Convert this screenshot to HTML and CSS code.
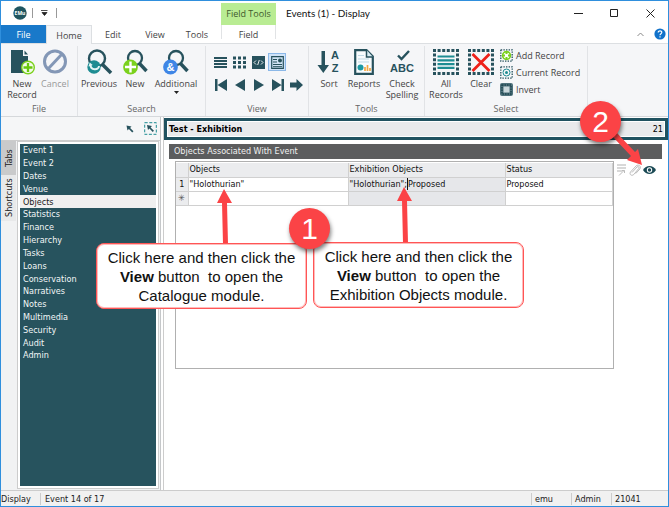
FILE: index.html
```html
<!DOCTYPE html>
<html lang="en">
<head>
<meta charset="utf-8">
<title>Events (1) - Display</title>
<link rel="stylesheet" href="styles.css">
</head>
<body>
<div class="window">
  <header class="titlebar">
    <div class="quick">
      <svg class="logo" width="14" height="14" viewBox="0 0 14 14"><circle cx="7" cy="7" r="6.7" fill="#1f5560"/><text x="7" y="9" text-anchor="middle" class="logo-text">EMu</text></svg>
      <span class="bar"></span>
      <button class="plain" aria-label="Customize toolbar"><svg width="7" height="6" viewBox="0 0 7 6"><path d="M0 .5h6.500M1 2.500h5L3.500 5.500z" stroke="#222" stroke-width=".8" fill="#222"/></svg></button>
      <span class="bar"></span>
    </div>
    <div class="context">Field Tools</div>
    <h1 class="title">Events (1) - Display</h1>
    <div class="win-buttons">
      <button aria-label="Minimize"><svg width="9" height="9"><path d="M0 4.500h9" stroke="#222"/></svg></button>
      <button aria-label="Maximize"><svg width="9" height="9"><path d="M.5.5h7v7h-7z" stroke="#222" fill="none"/></svg></button>
      <button aria-label="Close"><svg width="9" height="9"><path d="M.5.5l8 8M8.500.5l-8 8" stroke="#222"/></svg></button>
    </div>
  </header>

  <nav class="tabs">
    <button class="tab file">File</button>
    <button class="tab home">Home</button>
    <button class="tab">Edit</button>
    <button class="tab">View</button>
    <button class="tab">Tools</button>
    <button class="tab field">Field</button>
    <div class="tab-tools">
      <button class="plain" aria-label="Collapse ribbon"><svg width="7" height="5"><path d="M.5 4L3.500 1l3 3" stroke="#888" fill="none"/></svg></button>
      <button class="plain" aria-label="Help"><svg width="12" height="12"><circle cx="6" cy="6" r="5.600" fill="#1172ca"/><path d="M4.200 4.600c0-2.400 3.700-2.200 3.600-.1C7.700 5.700 6 5.700 6 7.200M6 8.300v1.200" stroke="#fff" stroke-width="1.200" fill="none"/></svg></button>
    </div>
  </nav>

  <div class="ribbon">
    <section class="group g-file">
      <div class="tools">
        <button class="big w32"><svg width="26" height="26" viewBox="0 0 26 26"><path d="M2 1h12v6h5v17H2z" fill="#27525d"/><path d="M15.500 1.500l3.500 4h-3.500z" fill="#27525d"/><circle cx="19" cy="18.500" r="6.300" fill="#f2fbe9" stroke="#7bd11d" stroke-width="1.400"/><path d="M19 14v9M14.500 18.500h9" stroke="#68c80c" stroke-width="2.300"/></svg><span>New<br>Record</span></button>
        <button class="big w34 off" disabled><svg width="26" height="26" viewBox="0 0 26 26"><circle cx="13" cy="12.500" r="10.500" fill="none" stroke="#8397b6" stroke-width="3"/><path d="M20 5L6 20" stroke="#8397b6" stroke-width="3"/></svg><span>Cancel</span></button>
      </div>
      <h2>File</h2>
    </section>
    <section class="group g-search">
      <div class="tools">
        <button class="big w40"><svg width="28" height="26" viewBox="0 0 28 26"><circle cx="12" cy="9.500" r="8" fill="none" stroke="#27525d" stroke-width="2.400"/><path d="M17 15l9 9" stroke="#27525d" stroke-width="3.600"/><circle cx="9" cy="18" r="6.700" fill="#1e8c92"/><path d="M5.500 16c0 5 8 6 8.500 1" stroke="#e3f4f4" stroke-width="2" fill="none"/><path d="M3.500 17.500l1.200-4 3 2.600z" fill="#e3f4f4"/></svg><span>Previous</span></button>
        <button class="big w32"><svg width="28" height="26" viewBox="0 0 28 26"><circle cx="14" cy="9" r="7" fill="none" stroke="#27525d" stroke-width="2.300"/><path d="M18.500 14.500l7 7.500" stroke="#27525d" stroke-width="3.400"/><circle cx="9.500" cy="18" r="7.400" fill="#7bd11d"/><path d="M9.500 12.500v11M4 18h11" stroke="#fff" stroke-width="2.400"/></svg><span>New</span></button>
        <button class="big w50"><svg width="28" height="26" viewBox="0 0 28 26"><circle cx="14" cy="9" r="7" fill="none" stroke="#27525d" stroke-width="2.300"/><path d="M18.500 14.500l7 7.500" stroke="#27525d" stroke-width="3.400"/><circle cx="8.500" cy="18" r="7.400" fill="#3f86e6"/><text x="8.500" y="22" text-anchor="middle" class="amp">&amp;</text></svg><span>Additional</span><svg class="drop" width="5" height="3"><path d="M0 0h5L2.500 3z" fill="#222"/></svg></button>
      </div>
      <h2>Search</h2>
    </section>
    <section class="group g-view">
      <div class="tools view-tools">
        <div class="view-row">
          <button aria-label="List"><svg width="13" height="13"><path d="M0 2h13M0 5h13M0 8h13M0 11h13" stroke="#27525d" stroke-width="1.900"/></svg></button>
          <button aria-label="Contact sheet"><svg width="13" height="13"><path d="M0 2h13M0 6.500h13M0 11h13" stroke="#27525d" stroke-width="3" stroke-dasharray="3 2"/></svg></button>
          <button aria-label="Page"><svg width="13" height="13"><path d="M0 0h13v13H0z" fill="#27525d"/><path d="M4 4.500l-2 2 2 2M9 4.500l2 2-2 2M7.300 4L5.700 9" stroke="#fff" stroke-width=".9" fill="none"/></svg></button>
          <button aria-label="Form" class="active"><svg width="13" height="13"><path d="M.7.700h11.600v11.600H.7z" stroke="#27525d" stroke-width="1.200" fill="#cfe3f4"/><path d="M2 3.500h4M2 6h4M2 8.500h9M2 10.700h9" stroke="#27525d"/><circle cx="9" cy="4.500" r="2" fill="#27525d"/></svg></button>
        </div>
        <div class="view-row nav-row">
          <button aria-label="First"><svg width="12" height="12"><path d="M0 0h2.500v12H0zM12 0v12L2.500 6z" fill="#27525d"/></svg></button>
          <button aria-label="Previous record"><svg width="10" height="12"><path d="M10 0v12L0 6z" fill="#27525d"/></svg></button>
          <button aria-label="Next record"><svg width="10" height="12"><path d="M0 0v12l10-6z" fill="#27525d"/></svg></button>
          <button aria-label="Last"><svg width="12" height="12"><path d="M9.500 0H12v12H9.500zM0 0v12l9.500-6z" fill="#27525d"/></svg></button>
          <button aria-label="Go to"><svg width="13" height="12"><path d="M0 3.500h6.500V0L13 6l-6.500 6V8.500H0z" fill="#27525d"/></svg></button>
        </div>
      </div>
      <h2>View</h2>
    </section>
    <section class="group g-tools">
      <div class="tools">
        <button class="big w34"><svg width="24" height="26" viewBox="0 0 24 26"><path d="M4.500 2h3.500v14h4L6.300 24 .5 16h4z" fill="#27525d"/><text x="18" y="10" text-anchor="middle" class="az">A</text><text x="18" y="23" text-anchor="middle" class="az">Z</text></svg><span>Sort</span></button>
        <button class="big w36"><svg width="20" height="26" viewBox="0 0 20 26"><path d="M1.200 1.200h11.300l6.300 6.300v17.300H1.200z" fill="#f8fcfe" stroke="#27525d" stroke-width="2.200"/><path d="M12.500 1v7H19" fill="#d8edf4" stroke="#27525d" stroke-width="1.500"/><path d="M4 6.500h6M4 10h11M4 13h11" stroke="#bfd9e5"/><circle cx="6.500" cy="18.500" r="3" fill="#1e9aa3"/><path d="M11 22v-4M13.500 22v-6M16 22v-3" stroke="#f5a844" stroke-width="1.700"/></svg><span>Reports</span></button>
        <button class="big w40"><svg width="26" height="26" viewBox="0 0 26 26"><path d="M9 6.500l3.500 3.500L20 2" stroke="#27525d" stroke-width="2.400" fill="none"/><text x="13" y="23" text-anchor="middle" class="abc">ABC</text></svg><span>Check<br>Spelling</span></button>
      </div>
      <h2>Tools</h2>
    </section>
    <section class="group g-select">
      <div class="tools">
        <button class="big w40"><svg width="26" height="26" viewBox="0 0 26 26"><path d="M0 1.500h26M0 24.500h26" stroke="#27525d" stroke-width="3" stroke-dasharray="3 1.600"/><path d="M1.500 4.600v17M24.500 4.600v17" stroke="#27525d" stroke-width="3" stroke-dasharray="3 1.600"/><path d="M4.500 7.500h17M4.500 11.300h17M4.500 15.100h17M4.500 18.900h17" stroke="#1e8c92" stroke-width="2.200"/></svg><span>All<br>Records</span></button>
        <button class="big w28"><svg width="26" height="26" viewBox="0 0 26 26"><path d="M0 1.500h26M0 24.500h26" stroke="#27525d" stroke-width="3" stroke-dasharray="3 1.600"/><path d="M1.500 4.600v17M24.500 4.600v17" stroke="#27525d" stroke-width="3" stroke-dasharray="3 1.600"/><path d="M4.500 5l17 17M21.500 5l-17 17" stroke="#ee2018" stroke-width="2.800"/></svg><span>Clear</span></button>
        <div class="small-list">
          <button><svg width="13" height="13"><path d="M.8.800h11.400v11.400H.8z" fill="none" stroke="#27525d" stroke-width="1.300" stroke-dasharray="1.400 1.200"/><circle cx="6.500" cy="6.500" r="3.900" fill="#fff" stroke="#7bd11d" stroke-width="1.600"/><path d="M6.500 2v3M6.500 8v3M2 6.500h3M8 6.500h3" stroke="#7bd11d" stroke-width="2"/></svg>Add Record</button>
          <button><svg width="13" height="13"><path d="M.8.800h11.400v11.400H.8z" fill="none" stroke="#27525d" stroke-width="1.300" stroke-dasharray="1.400 1.200"/><circle cx="6.500" cy="6.500" r="3.500" fill="none" stroke="#1e8c92"/><circle cx="6.500" cy="6.500" r="1.500" fill="#1e8c92"/></svg>Current Record</button>
          <button><svg width="13" height="13"><rect width="13" height="13" rx="2" fill="#4e717b"/><path d="M2 2h9v9H2z" fill="none" stroke="#1f4650" stroke-width="1.500" stroke-dasharray="1.500 1"/><path d="M3.500 3.500h6v6h-6z" fill="#c8d6da"/></svg>Invert</button>
        </div>
      </div>
      <h2>Select</h2>
    </section>
  </div>

  <main class="body">
    <aside class="side">
      <div class="side-tools">
        <button class="plain" aria-label="Select"><svg width="8" height="8"><path d="M.5.500l5 1-1.400 1.400L7.500 6.200 6.200 7.500 2.900 4.100 1.500 5.500z" fill="#27525d"/></svg></button>
        <button class="plain" aria-label="Select area"><svg width="13" height="13"><path d="M.7.700h11.600v11.600H.7z" fill="none" stroke="#1e8c92" stroke-dasharray="3 1.600"/><path d="M3 3l5 1-1.400 1.400L10 8.700 8.700 10 5.400 6.600 4 8z" fill="#27525d"/></svg></button>
      </div>
      <div class="side-main">
        <div class="vtabs">
          <button class="vtab on">Tabs</button>
          <button class="vtab">Shortcuts</button>
        </div>
        <div class="list-frame">
          <ul class="list">
            <li><button>Event 1</button></li>
            <li><button>Event 2</button></li>
            <li><button>Dates</button></li>
            <li><button>Venue</button></li>
            <li><button class="current">Objects</button></li>
            <li><button>Statistics</button></li>
            <li><button>Finance</button></li>
            <li><button>Hierarchy</button></li>
            <li><button>Tasks</button></li>
            <li><button>Loans</button></li>
            <li><button>Conservation</button></li>
            <li><button>Narratives</button></li>
            <li><button>Notes</button></li>
            <li><button>Multimedia</button></li>
            <li><button>Security</button></li>
            <li><button>Audit</button></li>
            <li><button>Admin</button></li>
          </ul>
        </div>
      </div>
    </aside>

    <section class="record">
      <div class="summary"><strong>Test - Exhibition</strong><span>21</span></div>
      <h2 class="section-title">Objects Associated With Event</h2>
      <div class="grid-row">
        <div class="grid-box">
          <table>
            <colgroup><col class="c-num"><col class="c-obj"><col class="c-exh"><col></colgroup>
            <thead><tr><th></th><th>Objects</th><th>Exhibition Objects</th><th>Status</th></tr></thead>
            <tbody>
              <tr><th>1</th><td>"Holothurian"</td><td class="shade">"Holothurian";<span class="caret"></span>Proposed</td><td>Proposed</td></tr>
              <tr><th class="star">✳</th><td></td><td class="shade"></td><td></td></tr>
            </tbody>
          </table>
        </div>
        <div class="grid-icons">
          <button class="plain" aria-label="Fill"><svg width="10" height="12"><path d="M0 1h9M0 4h9M0 7h5" stroke="#ccc" stroke-width="1.500"/><path d="M2 11.500L7 6.500M7.500 9V6.500H5" stroke="#bbb" fill="none"/></svg></button>
          <button class="plain" aria-label="Attach"><svg width="12" height="13"><path d="M3 8.500l5-5.500c1.300-1 2.500 0 1.700 1.500L4.800 10.500C2.500 12.500 0 10.300 1.500 8L7 2C9.500-.3 12.600 2.300 10.800 5l-4 4.500" stroke="#bbb" fill="none"/></svg></button>
          <button class="plain" aria-label="View"><svg width="13" height="8"><path d="M0 4C3-1.200 10-1.200 13 4 10 9.200 3 9.200 0 4z" fill="#1b4a55"/><circle cx="6.500" cy="4" r="2.700" fill="#fff"/><circle cx="6.500" cy="4" r="1.700" fill="#1b4a55"/></svg></button>
        </div>
      </div>
    </section>
  </main>

  <footer class="status">
    <span class="s-mode">Display</span><span class="s-pos">Event 14 of 17</span><span class="s-cell">emu</span><span class="s-cell">Admin</span><span class="s-cell s-last">21041</span>
  </footer>

  <svg class="arrows" width="669" height="507" viewBox="0 0 669 507" fill="#fb4346">
    <path d="M224 189l8 14h-5l1 41h-5l-1-41h-5z"/>
    <path d="M404 187l8 14h-5l1 42h-5l-1-42h-5z"/>
    <path d="M642 165l-15-5 4-4-18-19 4-4 18 19 3-3z"/>
  </svg>
  <div class="callout one">Click here and then click the<br><b>View</b> button&nbsp; to open the<br>Catalogue module.</div>
  <div class="callout two">Click here and then click the<br><b>View</b> button&nbsp; to open the<br>Exhibition Objects module.</div>
  <div class="badge b-one">1</div>
  <div class="badge b-two">2</div>
</div>
</body>
</html>
```

FILE: styles.css
```css
* { box-sizing: border-box; }
body { margin: 0; font: 9px/11px "Open Sans", "Noto Sans", sans-serif; color: #444; }
h1, h2 { margin: 0; font-size: inherit; font-weight: normal; }
button { margin: 0; padding: 0; border: 0; background: none; font: inherit; color: inherit; white-space: nowrap; }
svg { display: block; flex: none; }

.window { position: relative; display: flex; flex-direction: column; min-height: 100vh; border: 1px solid #2f8fdd; background: #fff; overflow: hidden; }

.titlebar { display: flex; height: 24px; }
.quick { display: flex; align-items: center; gap: 8px; width: 220px; padding-left: 12px; }
.quick .logo { margin-right: -3px; }
.logo-text { font: bold 5px "Open Sans", sans-serif; fill: #fff; }
.bar { width: 1px; height: 10px; background: #999; }
.context { width: 55px; margin-top: 2px; background: #b9ec93; line-height: 22px; text-align: center; color: #3f5a2c; }
.title { flex: 1; padding-left: 10px; font: 10px/24px Lato, "Open Sans", sans-serif; color: #111; }
.win-buttons { display: flex; }
.win-buttons button { display: flex; align-items: center; justify-content: center; width: 36px; }

.tabs { display: flex; height: 19px; border-bottom: 1px solid #dcdfe2; }
.tab { width: 42px; }
.file { width: 45px; height: 18px; background: #1979ca; color: #fff; }
.home { width: 46px; height: 19px; background: #f5f6f8; border: 1px solid #dcdfe2; border-bottom: 0; }
.field { width: 55px; height: 14px; margin-left: 3px; border: solid #e1e3e5; border-width: 0 1px; padding-top: 4px; }
.tab-tools { display: flex; align-items: center; gap: 10px; margin-left: auto; padding-right: 2px; }

.ribbon { display: flex; height: 73px; background: #f5f6f8; border-bottom: 1px solid #d5d8db; }
.group { display: flex; flex-direction: column; justify-content: space-between; margin-top: 2px; padding-top: 3px; border-right: 1px solid #e1e3e6; }
.group h2 { text-align: center; color: #666; line-height: 14px; }
.tools { display: flex; align-items: flex-start; padding-left: 1px; }
.g-file { width: 77px; }
.g-file .tools { padding-left: 5px; }
.g-search { width: 128px; }
.g-view { width: 103px; }
.g-tools { width: 116px; }
.g-tools .tools { padding-left: 3px; }
.g-select { width: 163px; }
.big { display: flex; flex-direction: column; align-items: center; }
.big span { margin-top: 3px; }
.off { color: #999; }
.drop { margin-top: 2px; }
.w28 { width: 30px; }
.w32 { width: 32px; }
.w34 { width: 34px; }
.w36 { width: 36px; }
.w40 { width: 40px; }
.w50 { width: 50px; }
.amp { font: bold 11px "Liberation Sans", sans-serif; fill: #fff; }
.az, .abc { font: bold 11px "Liberation Sans", sans-serif; fill: #27525d; }
.tools.view-tools { flex-direction: column; gap: 8px; padding: 4px 0 0 5px; }
.view-row { display: flex; align-items: center; }
.view-row button { display: flex; align-items: center; justify-content: center; width: 19px; height: 18px; }
.view-row .active { width: 18px; background: #cfe3f8; border: 1px solid #8bb8e8; }
.view-row.nav-row button { height: 12px; }
.small-list { display: flex; flex-direction: column; gap: 4px; margin-left: 4px; }
.small-list button { display: flex; align-items: center; gap: 3px; }

.body { flex: 1; display: flex; border-bottom: 1px solid #ccc; background: #fff; }
.side { display: flex; flex-direction: column; width: 160px; background: #f1f2f3; border-right: 1px solid #c5c7c9; }
.side-tools { display: flex; align-items: center; justify-content: flex-end; gap: 10px; height: 24px; padding-right: 3px; border-bottom: 1px solid #ccc; background: #f5f6f7; }
.side-main { flex: 1; display: flex; }
.vtabs { width: 16px; font: 9px/14px "DejaVu Sans Condensed", "DejaVu Sans", sans-serif; color: #222; }
.vtab { display: block; width: 15px; height: 46px; padding: 0; writing-mode: vertical-rl; transform: rotate(180deg); background: #e8e9ea; text-align: center; }
.vtab.on { height: 34px; background: #c9cacb; }
.list-frame { flex: 1; margin: 0 1px 1px 0; padding: 2px; border: 1px solid #ccc; background: #fff; display: flex; }
.list { flex: 1; margin: 0; padding: 0; list-style: none; background: #27535e; display: grid; grid-template-rows: repeat(17, calc(218px / 17)); }
.list button { display: block; width: 100%; height: 100%; padding-left: 3px; text-align: left; font: 9px/12px "DejaVu Sans Condensed", "DejaVu Sans", sans-serif; color: #f2f6f7; }
.list .current { background: #f0f0f0; color: #222; }

.record { flex: 1; display: flex; flex-direction: column; margin-left: 2px; padding-right: 6px; border-left: 1px solid #ccc; font: 9px/14px "DejaVu Sans Condensed", "DejaVu Sans", sans-serif; color: #222; }
.summary { display: flex; justify-content: space-between; align-items: center; height: 22px; margin: 1px -6px 0 0; padding: 0 2px; border: 3px solid #205260; background: #e9eaec; box-shadow: inset 0 0 0 1px #fff; color: #000; }
.section-title { margin: 4px 0 0 5px; padding-left: 5px; background: #5c5d5e; color: #f0f0f0; line-height: 15px; }
.grid-row { display: flex; align-items: flex-start; margin: 2px 0 0 11px; }
.grid-box { flex: 1; height: 208px; padding: 1px 0; border: 1px solid #b0b0b0; }
table { width: 100%; table-layout: fixed; border-collapse: collapse; color: #111; }
.c-num { width: 12px; }
.c-obj { width: 160px; }
.c-exh { width: 157px; }
th, td { height: 14px; padding: 0 1px; border: solid #d0d0d0; border-width: 0 1px 1px 0; font-weight: normal; text-align: left; line-height: 13px; white-space: nowrap; }
th { background: #ebecee; }
tbody th { text-align: center; padding: 0; }
.star { color: #555; }
.shade { background: #e6e7ea; }
.caret { display: inline-block; width: 1px; height: 12px; background: #111; vertical-align: middle; }
.grid-icons { display: flex; align-items: center; gap: 2px; width: 48px; height: 18px; padding-left: 3px; }

.status { display: flex; align-items: center; height: 15px; background: #f1f1f1; font: 9px/12px "DejaVu Sans Condensed", "DejaVu Sans", sans-serif; color: #222; }
.s-mode { width: 39px; }
.s-pos { flex: 1; padding-left: 4px; border-left: 1px solid #ccc; }
.s-cell { width: 40px; padding-left: 3px; border-left: 1px solid #ccc; }
.s-last { width: 57px; }

.arrows { position: absolute; left: -1px; top: -1px; }
.callout { position: absolute; width: 211px; height: 66px; padding-top: 4px; border: 1px solid #f55; border-radius: 8px; background: #fff; font: 15px/19px "Liberation Sans", sans-serif; color: #111; text-align: center; white-space: nowrap; box-shadow: inset 0 0 0 1px #fbb; }
.one { left: 95px; top: 242px; }
.two { left: 312px; top: 241px; }
.badge { position: absolute; width: 41px; height: 41px; border-radius: 50%; background: #fb4346; color: #fff; font: 30px/41px "Liberation Sans", sans-serif; text-align: center; box-shadow: 1px 3px 4px rgba(0, 0, 0, .5); }
.b-one { left: 288px; top: 207px; }
.b-two { left: 579px; top: 100px; }
```
